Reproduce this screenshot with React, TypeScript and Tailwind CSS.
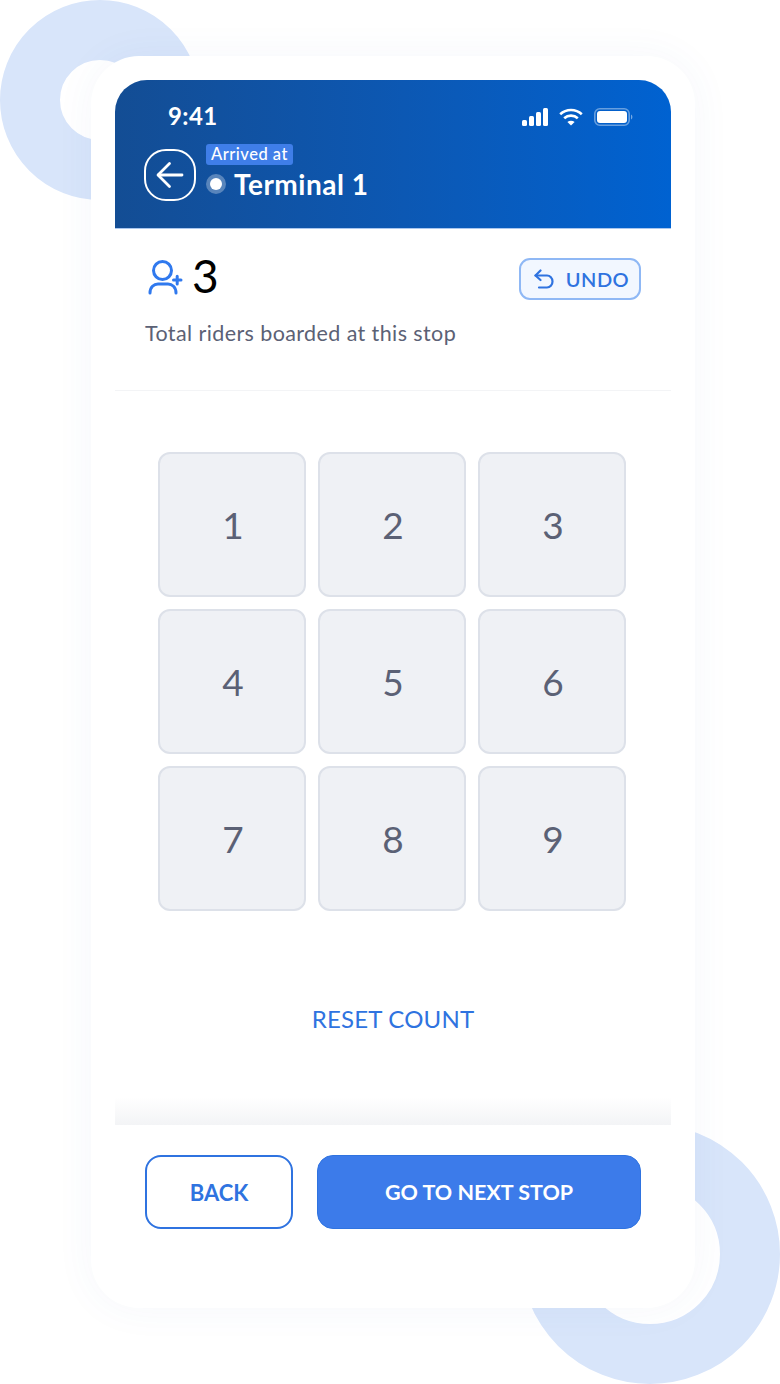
import React from 'react';

const keys = ['1', '2', '3', '4', '5', '6', '7', '8', '9'];

const StatusIcons: React.FC = () => (
  <div className="flex items-center gap-[11px] mt-[2px]">
    {/* signal */}
    <svg width="26" height="18" viewBox="0 0 26 18" fill="white">
      <rect x="0" y="12" width="5" height="6" rx="1.5" />
      <rect x="7" y="8" width="5" height="10" rx="1.5" />
      <rect x="14" y="4" width="5" height="14" rx="1.5" />
      <rect x="21" y="0" width="5" height="18" rx="1.5" />
    </svg>
    {/* wifi */}
    <svg width="24" height="18" viewBox="0 0 24 18" fill="none" stroke="white" strokeWidth="2.6">
      <path d="M1.2 6.2C7.2 0.6 16.8 0.6 22.8 6.2" />
      <path d="M5.2 10.2C9 6.7 15 6.7 18.8 10.2" />
      <path d="M12 17.6L8.4 13.9C10.4 12.2 13.6 12.2 15.6 13.9Z" fill="white" stroke="none" />
    </svg>
    {/* battery */}
    <svg width="39" height="18" viewBox="0 0 39 18" fill="none">
      <rect x="0.8" y="0.8" width="34.4" height="16.4" rx="5" stroke="white" strokeOpacity="0.4" strokeWidth="1.6" />
      <rect x="3" y="3" width="30" height="12" rx="3" fill="white" />
      <path d="M37 6.5C38 7 38.4 8 38.4 9C38.4 10 38 11 37 11.5Z" fill="white" fillOpacity="0.45" />
    </svg>
  </div>
);

const App: React.FC = () => {
  return (
    <div className="relative w-[780px] h-[1384px] overflow-hidden bg-white font-['Lato',sans-serif]">
      {/* Background rings */}
      <div className="absolute left-0 top-0 w-[200px] h-[200px] rounded-full border-[60px] border-[#d8e5fa]" />
      <div className="absolute left-[520px] top-[1124px] w-[260px] h-[260px] rounded-full border-[60px] border-[#d8e5fa]" />

      <div className="relative pt-[56px] pl-[91px]">
        {/* Phone card */}
        <div className="w-[604px] h-[1252px] bg-white rounded-[48px] px-[24px] pt-[24px] shadow-[0_0_40px_rgba(60,100,170,0.05)]">
          {/* Header */}
          <div className="h-[149px] rounded-t-[32px] bg-gradient-to-r from-[#134d94] to-[#0062d1] pl-[29px] pr-[38px] pt-[20px] border-b border-[#a9c6ee]">
            <div className="flex items-center justify-between h-[32px] pl-[24px]">
              <span className="text-[24px] font-bold text-white leading-none tracking-[0.4px]">9:41</span>
              <StatusIcons />
            </div>
            <div className="flex items-center gap-[10px] mt-[8px]">
              <button className="w-[52px] h-[52px] mt-[9px] rounded-[22px] border-2 border-white flex items-center justify-center">
                <svg width="28" height="28" viewBox="0 0 28 28" fill="none" stroke="white" strokeWidth="2.8" strokeLinecap="round" strokeLinejoin="round">
                  <path d="M26 14H2.5" />
                  <path d="M13.5 2.5L2 14L13.5 25.5" />
                </svg>
              </button>
              <div>
                <span className="inline-block h-[21px] px-[5px] rounded-[3px] bg-[#3f7ee8] text-white text-[16.5px] font-medium leading-[21px] tracking-[0.5px]">
                  Arrived at
                </span>
                <div className="flex items-center gap-[8px] mt-[2px]">
                  <span className="w-[20px] h-[20px] rounded-full bg-white/30 flex items-center justify-center">
                    <span className="w-[12px] h-[12px] rounded-full bg-white" />
                  </span>
                  <span className="text-[28px] font-bold text-white leading-[32px] tracking-[0.5px]">Terminal 1</span>
                </div>
              </div>
            </div>
          </div>

          {/* Rider count */}
          <div className="h-[162px] px-[30px] border-b border-[#f3f4f6]">
            <div className="flex items-center justify-between pt-[29px]">
              <div className="flex items-center gap-[8px] pl-[3px] mt-[-2px]">
                <svg width="36" height="36" viewBox="0 0 36 36" fill="none" stroke="#3079ee" strokeWidth="3" strokeLinecap="round">
                  <circle cx="14.5" cy="10.5" r="9" />
                  <path d="M2 33C2 27 6 24 10 24H20C24 24 28 27 28 33" />
                  <path d="M25.5 20H33M29.2 16.2V24" />
                </svg>
                <span className="text-[46px] text-black leading-[42px] -translate-y-[2px]">3</span>
              </div>
              <button className="w-[122px] h-[42px] rounded-[11px] border-2 border-[#8fb8f5] bg-[#f2f7ff] flex items-center justify-center gap-[12px] pl-[3px] text-[#2f73e0]">
                <svg width="20" height="20" viewBox="0 0 20 20" fill="none" stroke="currentColor" strokeWidth="2.2" strokeLinecap="round" strokeLinejoin="round">
                  <path d="M6.5 1.5L1.5 6.5L6.5 11" />
                  <path d="M1.5 6.5H13C16 6.5 18.5 9 18.5 12.5C18.5 16 16 18.5 13 18.5H5" />
                </svg>
                <span className="text-[20px] font-semibold leading-none tracking-[0.5px]">UNDO</span>
              </button>
            </div>
            <p className="mt-[19px] text-[21.5px] leading-[28px] text-[#5b6175] tracking-[0.4px]">Total riders boarded at this stop</p>
          </div>

          {/* Keypad */}
          <div className="grid grid-cols-[148px_148px_148px] auto-rows-[145px] gap-[12px] pt-[61px] pl-[43px]">
            {keys.map((k) => (
              <button
                key={k}
                className="rounded-[12px] border-2 border-[#dde1e9] bg-[#eff1f5] text-[37px] text-[#5b6175] flex items-center justify-center pl-[2px]"
              >
                {k}
              </button>
            ))}
          </div>

          <div className="mt-[91px] text-center text-[24px] leading-[34px] text-[#2f73e0] tracking-[0.2px]">RESET COUNT</div>

          {/* Fade above footer */}
          <div className="mt-[61px] h-[28px] bg-gradient-to-b from-white to-[#f3f4f6]" />

          {/* Footer */}
          <div className="flex gap-[24px] px-[30px] pt-[30px]">
            <button className="w-[148px] h-[74px] rounded-[16px] border-2 border-[#2f73e0] text-[#2f73e0] text-[22px] font-bold">BACK</button>
            <button className="w-[324px] h-[74px] rounded-[16px] border border-[#2f73e0] bg-[#3c7bea] text-white text-[21.5px] font-bold">GO TO NEXT STOP</button>
          </div>
        </div>
      </div>
    </div>
  );
};

export default App;
